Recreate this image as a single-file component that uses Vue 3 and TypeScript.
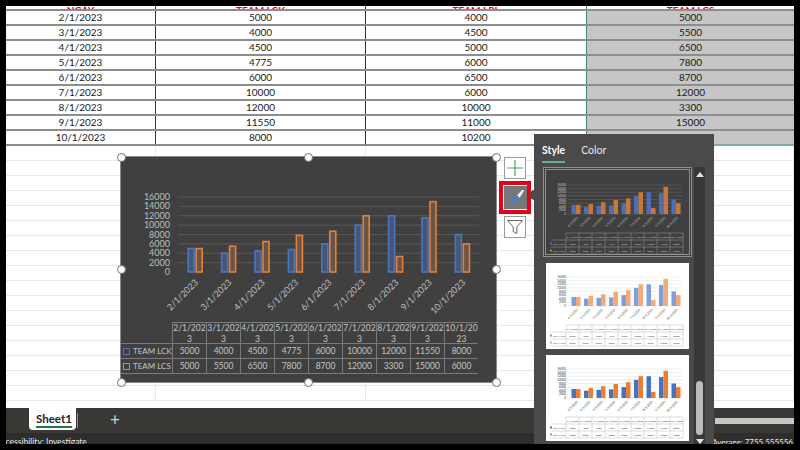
<script setup lang="ts">
const dates = ['2/1/2023', '3/1/2023', '4/1/2023', '5/1/2023', '6/1/2023', '7/1/2023', '8/1/2023', '9/1/2023', '10/1/2023']
const lck = [5000, 4000, 4500, 4775, 6000, 10000, 12000, 11550, 8000]
const lpl = [4000, 4500, 5000, 6000, 6500, 6000, 10000, 11000, 10200]
const lcs = [5000, 5500, 6500, 7800, 8700, 12000, 3300, 15000, 6000]

const axis = [0, 2000, 4000, 6000, 8000, 10000, 12000, 14000, 16000]
const emptyRows = 17

// main chart, coordinates are the ones of the page
const plotY = (v: number) => 272 - (v / 16000) * 75
const plotX = (i: number) => 193.7 + i * 33.4

// small previews in the style panel
const thumbY = (v: number) => 43 - (v / 16000) * 29
const thumbX = (i: number) => 30 + i * 12.5

const thumbs = [
  { cls: 'dark', blue: '#4a6fb4', orange: '#c8763a', grid: '#666', text: '#c4c4c4', line: '#999', view: '0 -1 143 84' },
  { cls: 'light', blue: '#7f9fdb', orange: '#f2aa78', grid: '#e2e2e2', text: '#444', line: '#bbb', view: '0 0 143 86' },
  { cls: 'light', blue: '#4472c4', orange: '#ed7d31', grid: '#dcdcdc', text: '#333', line: '#bbb', view: '0 0 143 86' }
]

const handles = [
  [0, 0], [50, 0], [100, 0],
  [0, 50], [100, 50],
  [0, 100], [50, 100], [100, 100]
]
</script>

<template>
  <div class="screen">
    <div class="excel">
      <div class="sheet">
        <div class="row head">
          <div class="cell">NGÀY</div>
          <div class="cell">TEAM LCK</div>
          <div class="cell">TEAM LPL</div>
          <div class="cell">TEAM LCS</div>
        </div>
        <div class="row" v-for="(d, i) in dates" :key="d">
          <div class="cell">{{ d }}</div>
          <div class="cell">{{ lck[i] }}</div>
          <div class="cell">{{ lpl[i] }}</div>
          <div class="cell sel" :class="{ last: i === dates.length - 1 }">{{ lcs[i] }}</div>
        </div>
        <div class="row empty" v-for="n in emptyRows" :key="n">
          <div class="cell"></div>
          <div class="cell"></div>
          <div class="cell"></div>
          <div class="cell"></div>
        </div>
      </div>

      <div class="tabs">
        <div class="tab"><span>Sheet1</span></div>
        <div class="sep"></div>
        <div class="add">+</div>
        <div class="hscroll"></div>
      </div>
      <div class="status">
        <span class="access">Accessibility: Investigate</span>
        <span class="avg">Average: 7755.555556</span>
      </div>

      <div class="chart">
        <svg class="plot" viewBox="120 157 376 165" width="376" height="165">
          <g v-for="a in axis" :key="a">
            <line v-if="a > 0" x1="177" x2="478" :y1="plotY(a)" :y2="plotY(a)" stroke="#5e5e5e" stroke-width="0.8" />
            <text class="axis" x="169" :y="plotY(a) + 3" text-anchor="end">{{ a }}</text>
          </g>
          <g v-for="(d, i) in dates" :key="d">
            <rect :x="plotX(i) - 6.5" :y="plotY(lck[i])" width="6" :height="272 - plotY(lck[i])" fill="#465773" stroke="#4a76c0" stroke-width="1.6" />
            <rect :x="plotX(i) + 1.5" :y="plotY(lcs[i])" width="6" :height="272 - plotY(lcs[i])" fill="#6b5444" stroke="#e0813c" stroke-width="1.6" />
            <text class="axis" text-anchor="end" :transform="`translate(${plotX(i) + 4} 283) rotate(-45)`">{{ d }}</text>
          </g>
        </svg>
        <div class="dtable">
          <div class="dcorner"></div>
          <div class="dcell dhead" v-for="d in dates" :key="d">{{ d }}</div>
          <div class="dlabel"><i class="key blue"></i>TEAM LCK</div>
          <div class="dcell" v-for="(v, i) in lck" :key="i">{{ v }}</div>
          <div class="dlabel"><i class="key orange"></i>TEAM LCS</div>
          <div class="dcell" v-for="(v, i) in lcs" :key="i">{{ v }}</div>
        </div>
        <i class="handle" v-for="(h, i) in handles" :key="i" :style="{ left: h[0] + '%', top: h[1] + '%' }"></i>
      </div>

      <div class="actions">
        <div class="btn">
          <svg width="16" height="16" viewBox="0 0 16 16"><path d="M8 0V16M0 8H16" stroke="#4fa56f" stroke-width="1.2" fill="none" /></svg>
        </div>
        <div class="redbox">
          <div class="btn on">
            <svg width="21" height="21" viewBox="0 0 21 21">
              <path d="M12 8.5 L17 3 Q19 2 18.6 4.5 L14.5 11 Z" fill="#eef1f4" />
              <path d="M12 8.5 L14.5 11 Q11 17 3 17 Q5.5 14.5 6.5 12 Q8.5 9.5 12 8.5 Z" fill="#4a7cc9" />
            </svg>
          </div>
        </div>
        <div class="btn">
          <svg width="18" height="18" viewBox="0 0 18 18"><path d="M1.5 2.5H16.5L10.8 9V15.5L7.2 13.5V9Z" stroke="#666" stroke-width="1" fill="#fff" /></svg>
        </div>
      </div>

      <div class="panel">
        <i class="notch"></i>
        <div class="ptabs">
          <span class="ptab on">Style</span>
          <span class="ptab">Color</span>
        </div>
        <div class="pbody">
          <div class="list">
            <div class="thumb" v-for="(t, k) in thumbs" :key="k" :class="t.cls">
              <svg width="143" :height="k === 0 ? 84 : 86" :viewBox="t.view">
                <g v-for="a in axis" :key="a">
                  <line x1="22" x2="136" :y1="thumbY(a)" :y2="thumbY(a)" :stroke="t.grid" stroke-width="0.5" />
                  <text class="tiny" x="20" :y="thumbY(a) + 1" text-anchor="end" :fill="t.text">{{ a }}</text>
                </g>
                <g v-for="(d, i) in dates" :key="d">
                  <rect :x="thumbX(i) - 4.5" :y="thumbY(lck[i])" width="4.5" :height="43 - thumbY(lck[i])" :fill="t.blue" />
                  <rect :x="thumbX(i)" :y="thumbY(lcs[i])" width="4.5" :height="43 - thumbY(lcs[i])" :fill="t.orange" />
                  <text class="tiny" text-anchor="end" :fill="t.text" :transform="`translate(${thumbX(i) + 2} 47) rotate(-45)`">{{ d }}</text>
                </g>
                <g :stroke="t.line" stroke-width="0.5">
                  <line x1="20" x2="137" y1="62" y2="62" />
                  <line x1="5" x2="137" y1="69" y2="69" />
                  <line x1="5" x2="137" y1="76" y2="76" />
                  <line x1="5" x2="137" y1="83" y2="83" />
                  <line v-for="n in 10" :key="n" :x1="20 + (n - 1) * 13" :x2="20 + (n - 1) * 13" y1="62" y2="83" />
                </g>
                <g v-for="(d, i) in dates" :key="d">
                  <text class="tiny cellt" :x="26.5 + i * 13" y="67" text-anchor="middle" :fill="t.text">{{ d }}</text>
                  <text class="tiny cellt" :x="26.5 + i * 13" y="74" text-anchor="middle" :fill="t.text">{{ lck[i] }}</text>
                  <text class="tiny cellt" :x="26.5 + i * 13" y="81" text-anchor="middle" :fill="t.text">{{ lcs[i] }}</text>
                </g>
                <rect x="4" y="71.5" width="2" height="2" :fill="t.blue" />
                <rect x="4" y="78.5" width="2" height="2" :fill="t.orange" />
                <text class="tiny cellt" x="7" y="74" :fill="t.text">TEAM LCK</text>
                <text class="tiny cellt" x="7" y="81" :fill="t.text">TEAM LCS</text>
              </svg>
            </div>
          </div>
          <div class="track">
            <i class="arrow up"></i>
            <div class="sthumb"></div>
            <i class="arrow down"></i>
          </div>
        </div>
      </div>
    </div>
  </div>
</template>

<style scoped>
.screen {
  width: 800px;
  height: 450px;
  box-sizing: border-box;
  padding: 6px;
  background: #000;
  font-family: Lato, "Open Sans", sans-serif;
}
.excel {
  position: relative;
  height: 438px;
  display: flex;
  flex-direction: column;
  overflow: hidden;
  background: #fff;
}
.sheet {
  height: 402px;
  flex: none;
  overflow: hidden;
}
.row {
  display: grid;
  grid-template-columns: 150px 210px 221px 1fr;
  height: 15px;
  box-sizing: border-box;
  border-bottom: 2px solid #8d8d8d;
  font-size: 10px;
  color: #1a1a1a;
}
.row.head {
  height: 5px;
  overflow: hidden;
  align-items: end;
  color: #e0001a;
  font-weight: 700;
}
.row.head .cell {
  height: 8px;
  line-height: 8px;
}
.cell {
  text-align: center;
  line-height: 13px;
  border-right: 1px solid #333;
}
.cell:nth-child(3) {
  border-right-color: #3e8a63;
}
.cell:last-child {
  border-right: none;
}
.cell.sel {
  background: #c6c6c6;
}
.cell.last {
  box-shadow: 0 2px 0 #7fae94;
}
.row.empty {
  border-bottom: 1px solid #e8e8e8;
}
.row.empty .cell {
  border-right: 1px solid #e8e8e8;
}

.tabs {
  height: 25px;
  flex: none;
  display: flex;
  background: #3a3835;
}
.tab {
  margin-left: 23px;
  width: 47px;
  height: 22px;
  box-sizing: border-box;
  padding: 3px 0 0 7px;
  background: #fff;
  border-radius: 0 0 4px 4px;
  font-size: 11.5px;
  font-weight: 700;
  color: #222;
}
.tab span {
  display: inline-block;
  line-height: 15px;
  border-bottom: 2px solid #1f7a4d;
}
.sep {
  width: 1px;
  height: 15px;
  margin: 5px 0 0 1px;
  background: #8b8b8b;
}
.add {
  margin-left: 32px;
  font-size: 17px;
  line-height: 24px;
  color: #cfcfcf;
}
.hscroll {
  margin: 10px 0 0 auto;
  width: 79px;
  height: 6px;
  background: #c6c6c6;
}
.status {
  flex: 1;
  display: flex;
  justify-content: space-between;
  padding: 3px 1px 0 0;
  overflow: hidden;
  background: #2e2d2b;
  font-size: 8.5px;
  line-height: 12px;
  color: #e2e2e2;
}
.access {
  margin-left: -10px;
}
.avg {
  font-size: 8px;
}

.chart {
  position: absolute;
  left: 115px;
  top: 151px;
  width: 375px;
  height: 225px;
  box-sizing: border-box;
  background: #404040;
  box-shadow: 0 0 0 1px #8a8a8a;
}
.plot {
  display: block;
}
.axis {
  font-family: Lato, sans-serif;
  font-size: 9px;
  fill: #bdbdbd;
}
.dtable {
  display: grid;
  grid-template-columns: 51px repeat(9, 34px);
  grid-template-rows: 22px 15px 15px;
  font-size: 8.5px;
  color: #c4c4c4;
}
.dcorner {
  border-bottom: 1px solid #7a7a7a;
}
.dcell {
  box-sizing: border-box;
  border-left: 1px solid #7a7a7a;
  border-bottom: 1px solid #7a7a7a;
  text-align: center;
  line-height: 14px;
}
.dcell:nth-child(10n + 1) {
  border-right: 1px solid #7a7a7a;
}
.dhead {
  border-top: 1px solid #7a7a7a;
  line-height: 10.5px;
  word-break: break-all;
}
.dlabel {
  display: flex;
  align-items: center;
  gap: 3px;
  padding-left: 2px;
  box-sizing: border-box;
  border-bottom: 1px solid #7a7a7a;
  white-space: nowrap;
  font-size: 8px;
}
.key {
  width: 5px;
  height: 5px;
  flex: none;
  border: 1px solid;
}
.key.blue {
  border-color: #4a76c0;
}
.key.orange {
  border-color: #e0813c;
}
.handle {
  position: absolute;
  width: 7px;
  height: 7px;
  margin: -4.5px 0 0 -4.5px;
  border: 1px solid #6e6e6e;
  border-radius: 50%;
  background: #fff;
}

.actions {
  position: absolute;
  left: 493px;
  top: 151px;
  width: 32px;
  display: flex;
  flex-direction: column;
  align-items: center;
  gap: 2px;
}
.btn {
  width: 22px;
  height: 22px;
  box-sizing: border-box;
  display: flex;
  align-items: center;
  justify-content: center;
  background: #fff;
  border: 1px solid #9a9a9a;
}
.btn.on {
  width: 23px;
  height: 23px;
  background: #777;
  border-color: #777;
}
.redbox {
  width: 32px;
  height: 33px;
  box-sizing: border-box;
  display: flex;
  align-items: center;
  justify-content: center;
  border: 4px solid #e2001a;
  background: #fff;
}

.panel {
  position: absolute;
  left: 528px;
  top: 128px;
  bottom: 0;
  width: 180px;
  display: flex;
  flex-direction: column;
  background: #4a4a4a;
}
.notch {
  position: absolute;
  left: -4px;
  top: 56px;
  width: 8px;
  height: 10px;
  border-radius: 50%;
  background: #4a4a4a;
}
.ptabs {
  height: 33px;
  flex: none;
  box-sizing: border-box;
  display: flex;
  gap: 16px;
  padding: 9px 0 0 8px;
  font-size: 10.5px;
  color: #e6e6e6;
}
.ptab {
  height: 20px;
  line-height: 14px;
  box-sizing: border-box;
}
.ptab.on {
  font-weight: 700;
  color: #fff;
  border-bottom: 2px solid #5fb58a;
}
.pbody {
  flex: 1;
  min-height: 0;
  display: flex;
  padding-left: 9px;
  overflow: hidden;
}
.list {
  width: 149px;
  display: flex;
  flex-direction: column;
  align-items: center;
  gap: 6px;
}
.thumb {
  flex: none;
  line-height: 0;
}
.thumb.dark {
  background: #404040;
  border: 3px double #8f8f8f;
}
.thumb.light {
  background: #fff;
}
.tiny {
  font-family: Lato, sans-serif;
  font-size: 3px;
}
.tiny.cellt {
  font-size: 2.6px;
}
.track {
  width: 11px;
  margin: 0 0 0 2px;
  display: flex;
  flex-direction: column;
  align-items: center;
  background: #383838;
}
.arrow {
  width: 0;
  height: 0;
  border-left: 4px solid transparent;
  border-right: 4px solid transparent;
}
.arrow.up {
  margin-top: 5px;
  border-bottom: 5px solid #e4e4e4;
}
.arrow.down {
  margin-top: 4px;
  border-top: 5px solid #e4e4e4;
}
.sthumb {
  margin-top: auto;
  width: 7px;
  height: 54px;
  flex: none;
  border-radius: 4px;
  background: #bcbcbc;
}
</style>
